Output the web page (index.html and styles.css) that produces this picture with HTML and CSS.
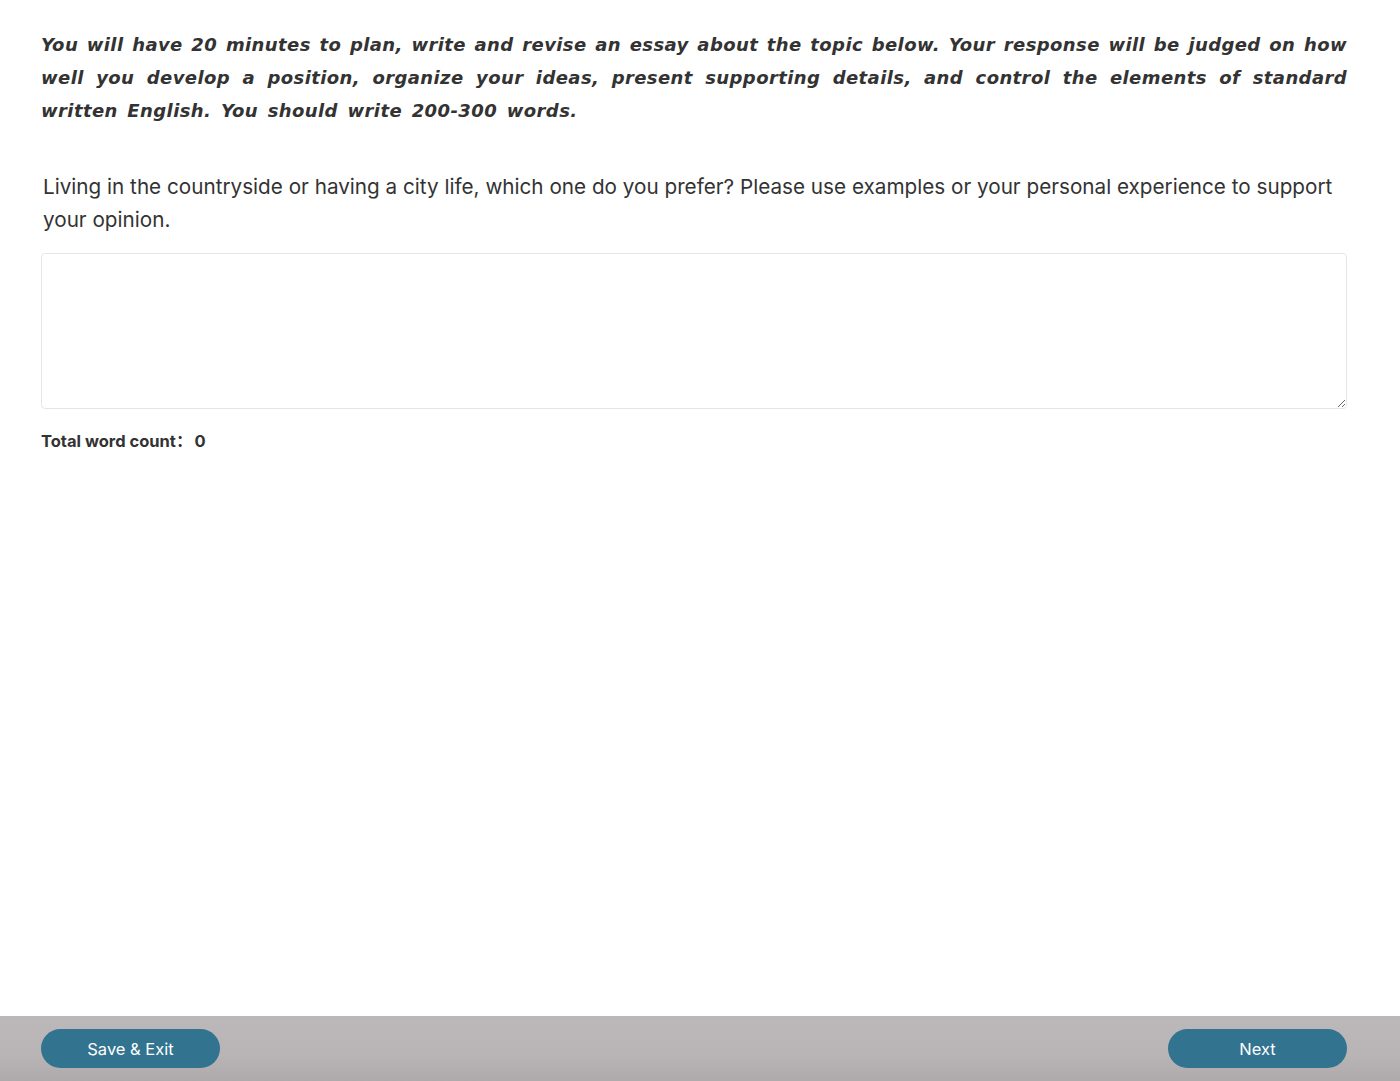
FILE: index.html
```html
<!DOCTYPE html>
<html>
<head>
<meta charset="utf-8">
<link rel="stylesheet" href="styles.css">
</head>
<body>
<main class="content">
  <p class="instructions"><span class="jl">You will have 20 minutes to plan, write and revise an essay about the topic below. Your response will be judged on how</span><span class="jl">well you develop a position, organize your ideas, present supporting details, and control the elements of standard</span><span class="ll">written English. You should write 200-300 words.</span></p>
  <p class="prompt">Living in the countryside or having a city life, which one do you prefer? Please use examples or your personal experience to support your opinion.</p>
  <textarea class="essay"></textarea>
  <div class="count">Total word count：<span class="num">0</span></div>
</main>
<footer class="footer">
  <button class="btn">Save &amp; Exit</button>
  <button class="btn">Next</button>
</footer>
</body>
</html>
```
FILE: styles.css
```css
html, body {
  margin: 0;
  padding: 0;
  background: #ffffff;
  height: 100%;
}
body {
  font-family: Inter, "Noto Sans", sans-serif;
  color: #333333;
}
.content {
  padding: 28px 53px 0 41px;
  display: flex;
  flex-direction: column;
}
.instructions {
  margin: 0;
  font-family: "DejaVu Sans", Verdana, sans-serif;
  font-weight: bold;
  font-style: italic;
  font-size: 18px;
  line-height: 33px;
  letter-spacing: 0.4px;
  color: #333333;
}
.jl {
  display: block;
  text-align: justify;
  text-align-last: justify;
}
.ll {
  display: block;
  word-spacing: 3px;
}
.prompt {
  margin: 43px 0 0 2px;
  font-size: 20.7px;
  line-height: 33px;
  color: #333333;
}
.essay {
  margin-top: 17px;
  height: 156px;
  box-sizing: border-box;
  border: 1px solid #e6e6e6;
  border-radius: 4px;
  resize: vertical;
  font-family: inherit;
  font-size: 16px;
  padding: 8px;
  outline: none;
}
.count {
  margin-top: 19px;
  font-family: Inter, "Noto Sans CJK SC", sans-serif;
  font-size: 16.5px;
  font-weight: bold;
  color: #333333;
}
.num {
  margin-left: 2px;
}
.footer {
  position: fixed;
  left: 0;
  right: 0;
  bottom: 0;
  height: 65px;
  box-sizing: border-box;
  padding: 0 53px 0 41px;
  display: flex;
  justify-content: space-between;
  align-items: center;
  background: linear-gradient(180deg, #bcb8b9 0%, #b9b5b6 60%, #aeaaab 100%);
}
.btn {
  width: 179px;
  height: 39px;
  border: none;
  border-radius: 20px;
  background: #32738f;
  color: #ffffff;
  font-family: Inter, "Noto Sans", sans-serif;
  font-size: 16.5px;
  cursor: pointer;
}
```
